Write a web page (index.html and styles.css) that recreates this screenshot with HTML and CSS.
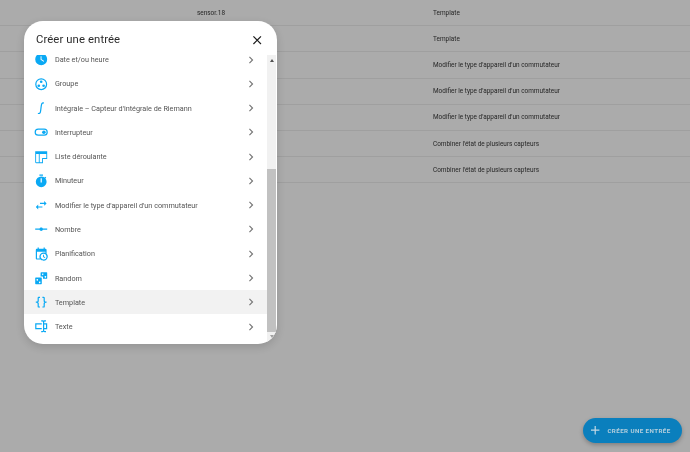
FILE: index.html
```html
<!DOCTYPE html>
<html lang="fr">
<head>
<meta charset="utf-8">
<title>Créer une entrée</title>
<link rel="stylesheet" href="styles.css">
</head>
<body>
<main class="table">
  <div class="row"><span class="c1">sensor.18</span><span class="c2">Template</span></div>
  <div class="row"><span class="c1"></span><span class="c2">Template</span></div>
  <div class="row"><span class="c1"></span><span class="c2">Modifier le type d'appareil d'un commutateur</span></div>
  <div class="row"><span class="c1"></span><span class="c2">Modifier le type d'appareil d'un commutateur</span></div>
  <div class="row"><span class="c1"></span><span class="c2">Modifier le type d'appareil d'un commutateur</span></div>
  <div class="row"><span class="c1"></span><span class="c2">Combiner l'état de plusieurs capteurs</span></div>
  <div class="row"><span class="c1"></span><span class="c2">Combiner l'état de plusieurs capteurs</span></div>
</main>

<section class="dialog">
  <header class="dialog-head">
    <h2>Créer une entrée</h2>
    <svg class="close" viewBox="0 0 24 24"><path d="M19,6.41L17.59,5L12,10.59L6.41,5L5,6.41L10.59,12L5,17.59L6.41,19L12,13.41L17.59,19L19,17.59L13.41,12L19,6.41Z"/></svg>
  </header>
  <div class="dialog-body">
    <ul class="list">
      <li class="item first"><svg class="ic" viewBox="0 0 24 24"><path d="M12,2A10,10 0 0,0 2,12A10,10 0 0,0 12,22A10,10 0 0,0 22,12A10,10 0 0,0 12,2M16.2,16.2L11,13V7H12.5V12.2L17,14.9L16.2,16.2Z"/></svg><span>Date et/ou heure</span><svg class="chev" viewBox="0 0 24 24"><path d="M8.59,16.58L13.17,12L8.59,7.41L10,6L16,12L10,18L8.59,16.58Z"/></svg></li>
      <li class="item"><svg class="ic" viewBox="0 0 24 24"><path fill-rule="evenodd" d="M12,2A10,10 0 1,0 12,22A10,10 0 1,0 12,2ZM12,4A8,8 0 1,1 12,20A8,8 0 1,1 12,4Z"/><circle cx="12" cy="8" r="2.2"/><circle cx="8" cy="14.5" r="2.2"/><circle cx="16" cy="14.5" r="2.2"/></svg><span>Groupe</span><svg class="chev" viewBox="0 0 24 24"><path d="M8.59,16.58L13.17,12L8.59,7.41L10,6L16,12L10,18L8.59,16.58Z"/></svg></li>
      <li class="item"><svg class="ic" viewBox="0 0 24 24"><path class="stroke" d="M16.5,3.5C13,2.5 12.5,5 12,9L11,17C10.6,20.500 9,21.500 6.500,20.500"/></svg><span>Intégrale – Capteur d'intégrale de Riemann</span><svg class="chev" viewBox="0 0 24 24"><path d="M8.59,16.58L13.17,12L8.59,7.41L10,6L16,12L10,18L8.59,16.58Z"/></svg></li>
      <li class="item"><svg class="ic" viewBox="0 0 24 24"><path fill-rule="evenodd" d="M7,6H17A6,6 0 0,1 17,18H7A6,6 0 0,1 7,6ZM7,8A4,4 0 0,0 7,16H17A4,4 0 0,0 17,8Z"/><circle cx="16.500" cy="12" r="3"/></svg><span>Interrupteur</span><svg class="chev" viewBox="0 0 24 24"><path d="M8.59,16.58L13.17,12L8.59,7.41L10,6L16,12L10,18L8.59,16.58Z"/></svg></li>
      <li class="item"><svg class="ic" viewBox="0 0 24 24"><path fill-rule="evenodd" d="M2,2H22V15H15V22H4A2,2 0 0,1 2,20ZM3.500,6.500V20A.5,.5 0 0,0 4,20.500H8V6.500ZM9.500,6.500V20.500H13.500V13.500H20.500V6.500ZM15,6.500V13.500"/></svg><span>Liste déroulante</span><svg class="chev" viewBox="0 0 24 24"><path d="M8.59,16.58L13.17,12L8.59,7.41L10,6L16,12L10,18L8.59,16.58Z"/></svg></li>
      <li class="item"><svg class="ic" viewBox="0 0 24 24"><path d="M19.03,7.39L20.45,5.97C20,5.46 19.55,5 19.04,4.56L17.62,6C16.07,4.74 14.12,4 12,4A9,9 0 0,0 3,13A9,9 0 0,0 12,22C17,22 21,17.97 21,13C21,10.88 20.26,8.93 19.03,7.39M13,14H11V7H13V14M15,1H9V3H15V1Z"/></svg><span>Minuteur</span><svg class="chev" viewBox="0 0 24 24"><path d="M8.59,16.58L13.17,12L8.59,7.41L10,6L16,12L10,18L8.59,16.58Z"/></svg></li>
      <li class="item"><svg class="ic" viewBox="0 0 24 24"><path d="M21,9L17,5V8H10V10H17V13M7,11L3,15L7,19V16H14V14H7V11Z"/></svg><span>Modifier le type d'appareil d'un commutateur</span><svg class="chev" viewBox="0 0 24 24"><path d="M8.59,16.58L13.17,12L8.59,7.41L10,6L16,12L10,18L8.59,16.58Z"/></svg></li>
      <li class="item"><svg class="ic" viewBox="0 0 24 24"><path d="M2,11H9.17C9.58,9.83 10.69,9 12,9C13.31,9 14.42,9.83 14.83,11H22V13H14.83C14.42,14.17 13.31,15 12,15C10.69,15 9.58,14.17 9.17,13H2V11Z"/></svg><span>Nombre</span><svg class="chev" viewBox="0 0 24 24"><path d="M8.59,16.58L13.17,12L8.59,7.41L10,6L16,12L10,18L8.59,16.58Z"/></svg></li>
      <li class="item"><svg class="ic" viewBox="0 0 24 24"><path d="M15,13H16.5V15.82L18.94,17.23L18.19,18.53L15,16.69V13M19,8H5V19H9.67C9.24,18.09 9,17.07 9,16A7,7 0 0,1 16,9C17.07,9 18.09,9.24 19,9.67V8M5,21C3.89,21 3,20.1 3,19V5C3,3.89 3.89,3 5,3H6V1H8V3H16V1H18V3H19A2,2 0 0,1 21,5V11.1C22.24,12.36 23,14.09 23,16A7,7 0 0,1 16,23C14.09,23 12.36,22.24 11.1,21H5M16,11.15A4.85,4.85 0 0,0 11.15,16C11.15,18.68 13.32,20.85 16,20.85A4.85,4.85 0 0,0 20.85,16C20.85,13.32 18.68,11.15 16,11.15Z"/></svg><span>Planification</span><svg class="chev" viewBox="0 0 24 24"><path d="M8.59,16.58L13.17,12L8.59,7.41L10,6L16,12L10,18L8.59,16.58Z"/></svg></li>
      <li class="item"><svg class="ic" viewBox="0 0 24 24"><path fill-rule="evenodd" d="M3,11H12A1,1 0 0,1 13,12V21A1,1 0 0,1 12,22H3A1,1 0 0,1 2,21V12A1,1 0 0,1 3,11ZM5.500,13.500A1.300,1.300 0 1,0 5.501,13.500ZM9.500,17.500A1.300,1.300 0 1,0 9.501,17.500Z"/><path fill-rule="evenodd" d="M12,2H21A1,1 0 0,1 22,3V12A1,1 0 0,1 21,13H15V10A1,1 0 0,0 14,9H11V3A1,1 0 0,1 12,2ZM14.500,4A1.300,1.300 0 1,0 14.501,4ZM19,8.500A1.300,1.300 0 1,0 19.001,8.500Z"/></svg><span>Random</span><svg class="chev" viewBox="0 0 24 24"><path d="M8.59,16.58L13.17,12L8.59,7.41L10,6L16,12L10,18L8.59,16.58Z"/></svg></li>
      <li class="item active"><svg class="ic" viewBox="0 0 24 24"><path d="M8,3A2,2 0 0,0 6,5V9A2,2 0 0,1 4,11H3V13H4A2,2 0 0,1 6,15V19A2,2 0 0,0 8,21H10V19H8V14A2,2 0 0,0 6,12A2,2 0 0,0 8,10V5H10V3M16,3A2,2 0 0,1 18,5V9A2,2 0 0,0 20,11H21V13H20A2,2 0 0,0 18,15V19A2,2 0 0,1 16,21H14V19H16V14A2,2 0 0,1 18,12A2,2 0 0,1 16,10V5H14V3H16Z"/></svg><span>Template</span><svg class="chev" viewBox="0 0 24 24"><path d="M8.59,16.58L13.17,12L8.59,7.41L10,6L16,12L10,18L8.59,16.58Z"/></svg></li>
      <li class="item"><svg class="ic" viewBox="0 0 24 24"><path d="M17,7H22V17H17V19A1,1 0 0,0 18,20H20V22H17.5C16.95,22 16,21.55 16,21C16,21.55 15.05,22 14.5,22H12V20H14A1,1 0 0,0 15,19V5A1,1 0 0,0 14,4H12V2H14.5C15.05,2 16,2.45 16,3C16,2.45 16.95,2 17.5,2H20V4H18A1,1 0 0,0 17,5V7M2,7H13V9H4V15H13V17H2V7M20,15V9H17V15H20Z"/></svg><span>Texte</span><svg class="chev" viewBox="0 0 24 24"><path d="M8.59,16.58L13.17,12L8.59,7.41L10,6L16,12L10,18L8.59,16.58Z"/></svg></li>
    </ul>
    <div class="scrollbar">
      <div class="track"><i class="arrow up"></i></div>
      <div class="thumb"></div>
      <div class="end"><i class="arrow down"></i></div>
    </div>
  </div>
</section>

<button class="fab"><svg viewBox="0 0 24 24"><path d="M19,13H13V19H11V13H5V11H11V5H13V11H19V13Z"/></svg><span>CRÉER UNE ENTRÉE</span></button>
</body>
</html>
```

FILE: styles.css
```css
* { box-sizing: border-box; }
html, body { margin: 0; padding: 0; height: 100%; }
body {
  width: 690px;
  height: 452px;
  overflow: hidden;
  background: #ababab;
  font-family: Roboto, "Liberation Sans", sans-serif;
  position: relative;
}
.table { display: flex; flex-direction: column; margin-top: -0.5px; will-change: transform; }
.row {
  display: grid;
  grid-template-columns: 433px 1fr;
  height: 26.2px;
  align-items: center;
  border-bottom: 1px solid #9f9f9f;
  font-size: 6.450px;
  color: #262626;
}
.c1 { padding-left: 197px; }

.dialog {
  position: absolute;
  left: 24px;
  top: 21px;
  width: 253px;
  height: 323px;
  background: #fff;
  border-radius: 19px;
  display: flex;
  flex-direction: column;
  overflow: hidden;
  box-shadow: 0 3px 8px rgba(0,0,0,.14);
  will-change: transform;
}
.dialog-head {
  height: 34px;
  flex: none;
  display: flex;
  align-items: center;
  justify-content: space-between;
  padding: 3.500px 13px 0 12px;
}
.dialog-head h2 {
  margin: 0;
  font-size: 11.300px;
  font-weight: 400;
  letter-spacing: .1px;
  color: #2b2b2b;
}
.close { width: 14.400px; height: 14.400px; fill: #202020; }
.dialog-body { flex: 1; display: flex; min-height: 0; }
.list {
  list-style: none;
  margin: 0;
  padding: 0;
  flex: 1;
  overflow: hidden;
}
.item {
  height: 24.270px;
  display: flex;
  align-items: center;
  padding: 0 9.500px 0 10px;
  font-size: 7.250px;
  color: #555;
}
.item.first { margin-top: -7.500px; }
.item span { flex: 1; padding-left: 6.500px; white-space: nowrap; }
.item.active { background: #f2f2f2; }
.ic { width: 14.400px; height: 14.400px; flex: none; fill: #0aa9f4; }
.ic .stroke { fill: none; stroke: #0aa9f4; stroke-width: 2; }
.chev { width: 14px; height: 14px; flex: none; fill: #777; }

.scrollbar {
  width: 10px;
  flex: none;
  display: flex;
  flex-direction: column;
  padding-right: 1px;
}
.track { height: 114px; background: #f1f1f1; display: flex; justify-content: center; padding-top: 4px; }
.thumb { height: 163px; background: #c1c1c1; }
.end { flex: 1; background: #f1f1f1; display: flex; justify-content: center; padding-top: 3px; }
.arrow { width: 0; height: 0; border-left: 2.500px solid transparent; border-right: 2.500px solid transparent; }
.arrow.up { border-bottom: 3px solid #505050; }
.arrow.down { border-top: 3px solid #a0a0a0; }

.fab {
  position: absolute;
  left: 583px;
  top: 418px;
  width: 99px;
  height: 25px;
  border: 0;
  border-radius: 13px;
  background: #0a7fbd;
  color: #b4cfdd;
  display: flex;
  align-items: center;
  padding: 0 0 0 5px;
  font-family: Roboto, "Liberation Sans", sans-serif;
  font-size: 6.200px;
  font-weight: 700;
  letter-spacing: .42px;
  white-space: nowrap;
  box-shadow: 0 2px 4px rgba(0,0,0,.25);
  will-change: transform;
}
.fab svg { width: 14.400px; height: 14.400px; fill: #c3d9e5; flex: none; margin-right: 5px; }
```
